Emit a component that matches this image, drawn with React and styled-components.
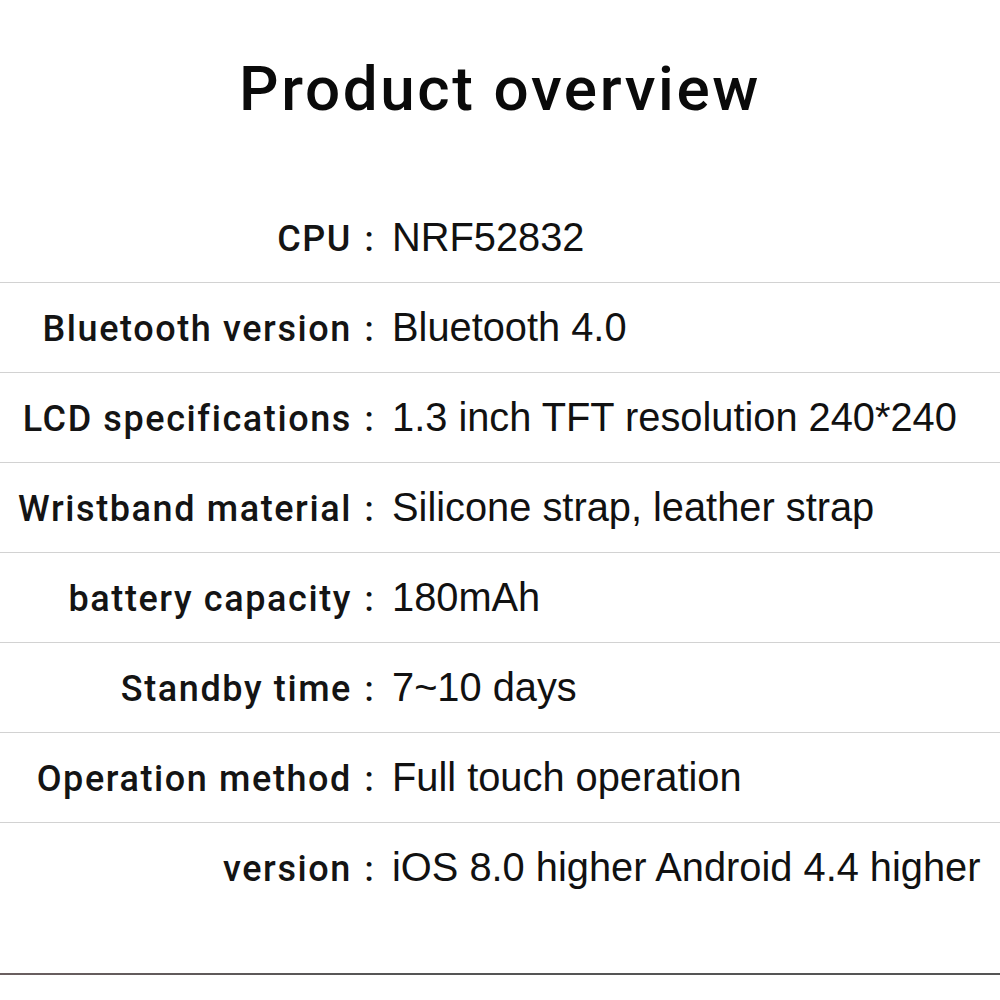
import styled, { createGlobalStyle } from 'styled-components'

const GlobalStyle = createGlobalStyle`
  html, body {
    margin: 0;
    padding: 0;
    background: #fff;
  }
`;

const Page = styled.div`
  width: 1000px;
  height: 1000px;
  background: #fff;
  color: #111;
  display: flex;
  flex-direction: column;
  overflow: hidden;
`;

const Title = styled.h1`
  margin: 0;
  height: 193px;
  padding-top: 54px;
  box-sizing: border-box;
  text-align: center;
  font-family: Roboto, 'Liberation Sans', sans-serif;
  font-weight: 500;
  font-size: 62px;
  line-height: 70px;
  letter-spacing: 2.6px;
  color: #0a0a0a;
`;

const Specs = styled.div`
  display: flex;
  flex-direction: column;
`;

const Row = styled.div`
  display: grid;
  grid-template-columns: 352px 40px 1fr;
  align-items: baseline;
  height: 89px;
  line-height: 89px;
  border-bottom: 1px solid ${props => (props.last ? 'transparent' : '#d2d2d2')};
`;

const Label = styled.span`
  text-align: right;
  font-family: Roboto, 'Liberation Sans', sans-serif;
  font-weight: 500;
  font-size: 36px;
  letter-spacing: 1.6px;
  color: #141414;
  white-space: nowrap;
`;

const Colon = styled.span`
  text-align: center;
  font-family: Roboto, 'Liberation Sans', sans-serif;
  font-weight: 500;
  font-size: 35px;
  padding-right: 6px;
`;

const Value = styled.span`
  font-family: 'Liberation Sans', Arial, sans-serif;
  font-weight: 400;
  font-size: 39.8px;
  color: #111;
  white-space: nowrap;
`;

const Spacer = styled.div`
  flex: 1;
`;

const BottomRule = styled.div`
  height: 2px;
  margin-bottom: 25px;
  background: linear-gradient(90deg, #6a5f60 0%, #555 40%, #555 100%);
`;

const specs = [
  ['CPU', 'NRF52832'],
  ['Bluetooth version', 'Bluetooth 4.0'],
  ['LCD specifications', '1.3 inch TFT resolution 240*240'],
  ['Wristband material', 'Silicone strap, leather strap'],
  ['battery capacity', '180mAh'],
  ['Standby time', '7~10 days'],
  ['Operation method', 'Full touch operation'],
  ['version', 'iOS 8.0 higher Android 4.4 higher']
]

export default function App() {
  return (
    <>
      <GlobalStyle />
      <Page>
        <Title>Product overview</Title>
        <Specs>
          {specs.map(([label, value], i) => (
            <Row key={label} last={i === specs.length - 1}>
              <Label>{label}</Label>
              <Colon>:</Colon>
              <Value>{value}</Value>
            </Row>
          ))}
        </Specs>
        <Spacer />
        <BottomRule />
      </Page>
    </>
  )
}
